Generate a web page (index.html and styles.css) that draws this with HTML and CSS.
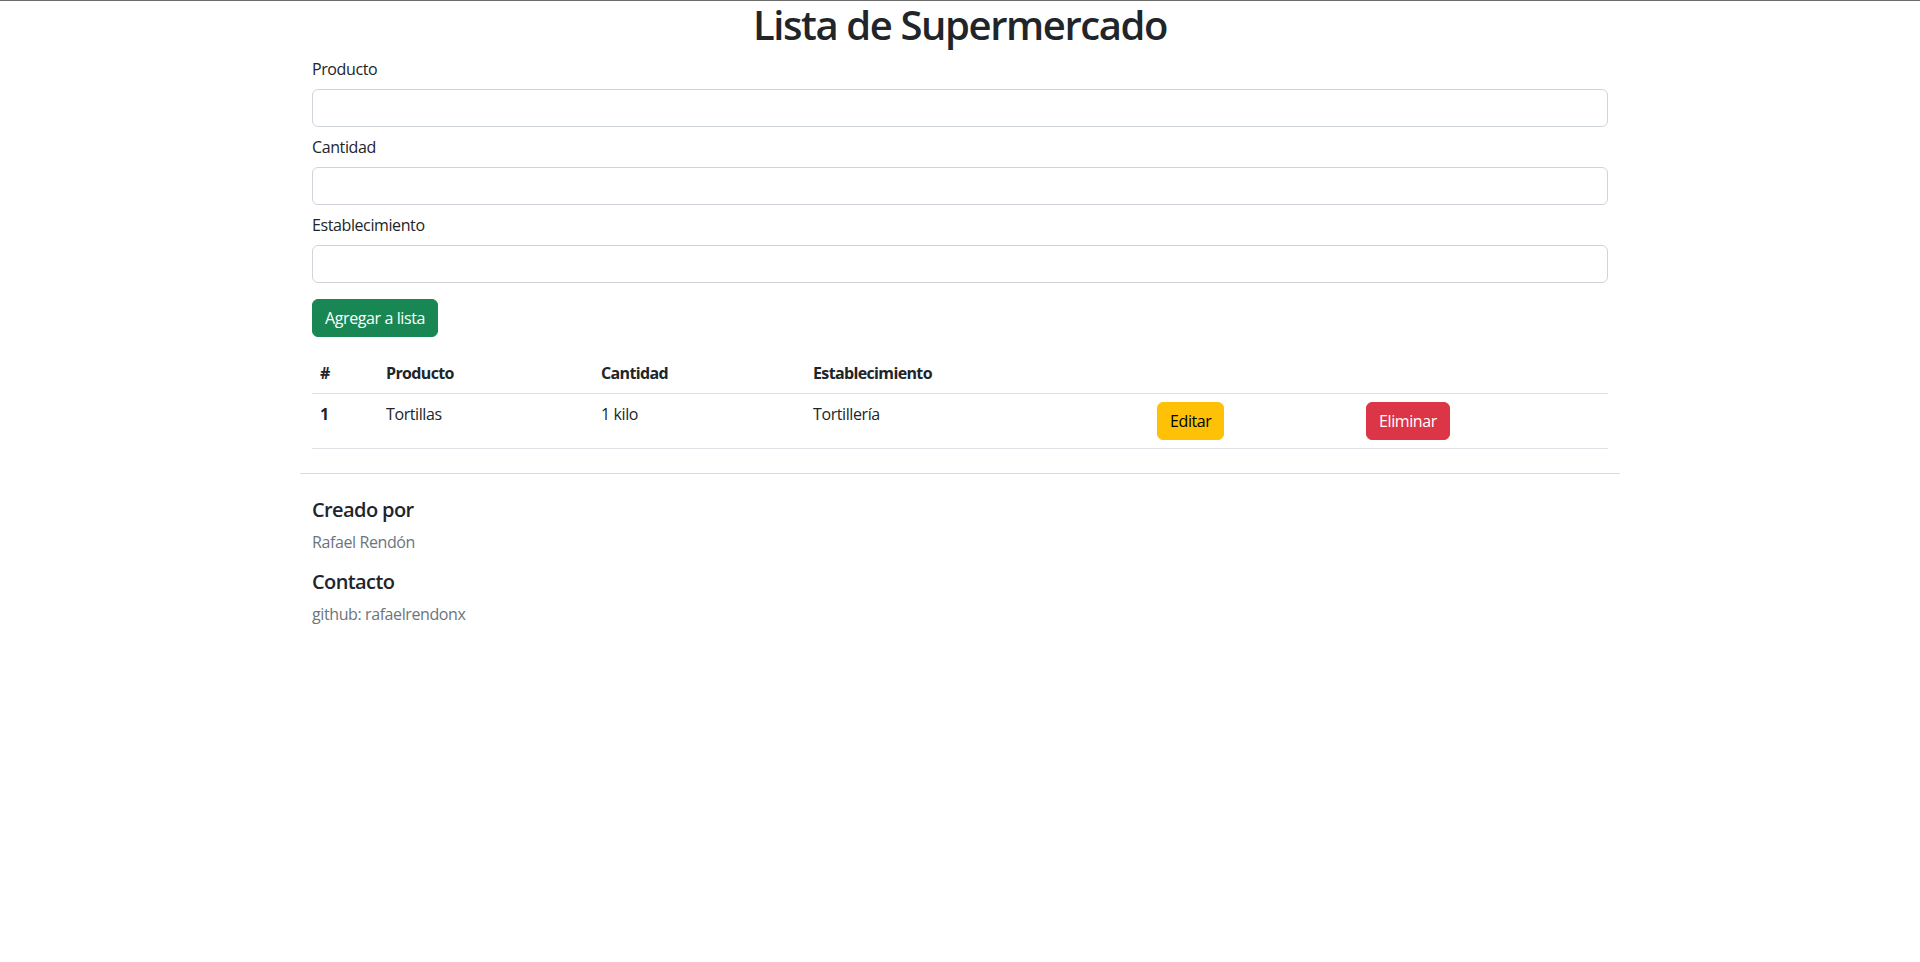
FILE: index.html
```html
<!DOCTYPE html>
<html lang="es">
<head>
<meta charset="utf-8">
<title>Lista de Supermercado</title>
<link rel="stylesheet" href="styles.css">
</head>
<body>
<div class="container">
  <h1 class="title">Lista de Supermercado</h1>
  <form class="form">
    <div class="field">
      <label class="form-label" for="producto">Producto</label>
      <input class="form-control" id="producto" type="text">
    </div>
    <div class="field">
      <label class="form-label" for="cantidad">Cantidad</label>
      <input class="form-control" id="cantidad" type="text">
    </div>
    <div class="field">
      <label class="form-label" for="establecimiento">Establecimiento</label>
      <input class="form-control" id="establecimiento" type="text">
    </div>
    <button type="button" class="btn btn-success">Agregar a lista</button>
  </form>
  <table class="table">
    <colgroup>
      <col class="c-num"><col class="c-prod"><col class="c-cant"><col class="c-est"><col class="c-edit"><col class="c-del">
    </colgroup>
    <thead>
      <tr><th>#</th><th>Producto</th><th>Cantidad</th><th>Establecimiento</th><th></th><th></th></tr>
    </thead>
    <tbody>
      <tr>
        <th>1</th><td>Tortillas</td><td>1 kilo</td><td>Tortillería</td>
        <td><button type="button" class="btn btn-warning">Editar</button></td>
        <td><button type="button" class="btn btn-danger">Eliminar</button></td>
      </tr>
    </tbody>
  </table>
  <hr class="divider">
  <footer class="footer">
    <h5 class="foot-title">Creado por</h5>
    <p class="foot-text">Rafael Rendón</p>
    <h5 class="foot-title">Contacto</h5>
    <p class="foot-text">github: rafaelrendonx</p>
  </footer>
</div>
</body>
</html>
```
FILE: styles.css
```css
* { box-sizing: border-box; }
html, body { margin: 0; padding: 0; }
body {
  border-top: 1px solid #6d6d6d;
  font-family: "Open Sans", "Noto Sans", sans-serif;
  font-size: 16px;
  line-height: 1.5;
  letter-spacing: -0.025em;
  color: #212529;
  background: #fff;
}
.container {
  width: 1320px;
  margin: 0 auto;
  padding: 0 12px;
}
.title {
  margin: 0 0 8px;
  text-align: center;
  font-size: 40px;
  font-weight: 600;
  line-height: 1.2;
  letter-spacing: -0.035em;
}
.form { margin: 0; }
.field { margin-bottom: 8px; }
.form-label {
  display: block;
  margin-bottom: 8px;
  line-height: 24px;
}
.form-control {
  display: block;
  width: 100%;
  height: 38px;
  padding: 6px 12px;
  font: inherit;
  border: 1px solid #ced4da;
  border-radius: 6px;
  background: #fff;
}
.btn {
  display: inline-block;
  padding: 6px 12px;
  font: inherit;
  letter-spacing: inherit;
  line-height: 24px;
  border: 1px solid transparent;
  border-radius: 6px;
  cursor: pointer;
}
.form .btn { margin-top: 8px; }
.btn-success { background: #198754; border-color: #198754; color: #fff; }
.btn-warning { background: #ffc107; border-color: #ffc107; color: #000; }
.btn-danger { background: #dc3545; border-color: #dc3545; color: #fff; }
.table {
  width: 100%;
  margin-top: 16px;
  border-collapse: collapse;
  table-layout: fixed;
  vertical-align: top;
}
.c-num { width: 66px; }
.c-prod { width: 215px; }
.c-cant { width: 212px; }
.c-est { width: 344px; }
.c-edit { width: 209px; }
.c-del { width: 250px; }
.table th, .table td {
  padding: 8px;
  text-align: left;
  vertical-align: top;
  border-bottom: 1px solid #dee2e6;
}
.table th { font-weight: 700; letter-spacing: -0.04em; }
.table td { font-weight: 400; }
.divider {
  margin: 24px -12px;
  border: 0;
  border-top: 1px solid #dadbdc;
  height: 0;
}
.foot-title {
  margin: 0 0 8px;
  font-size: 20px;
  font-weight: 600;
  line-height: 1.2;
  letter-spacing: -0.03em;
}
.foot-text {
  margin: 0 0 16px;
  color: #6c757d;
}
```
